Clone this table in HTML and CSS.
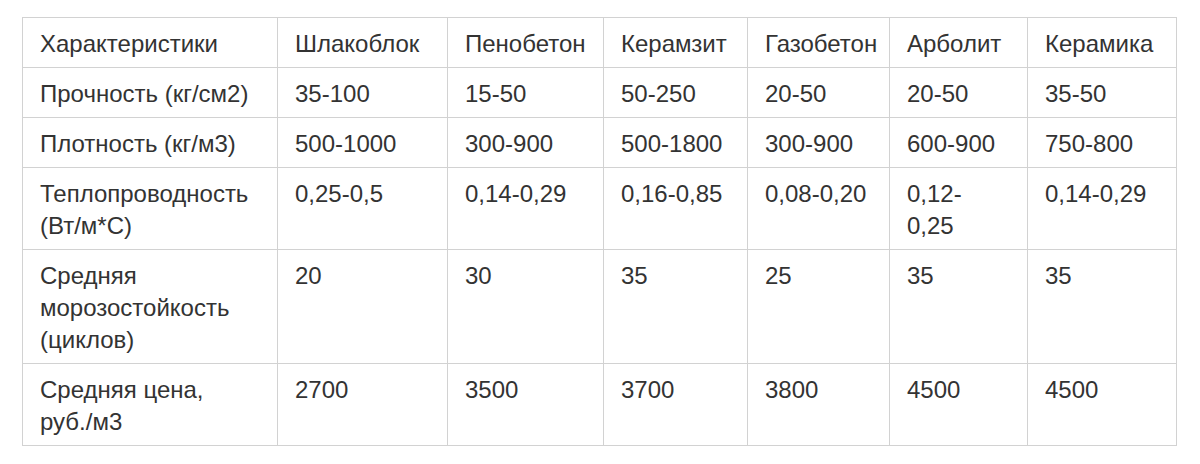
FILE: index.html
```html
<!DOCTYPE html>
<html lang="ru">
<head>
<meta charset="utf-8">
<title>Характеристики блоков</title>
<link rel="stylesheet" href="styles.css">
</head>
<body>
<div class="page">
  <table class="spec">
    <colgroup>
      <col class="c1"><col class="c2"><col class="c3"><col class="c4"><col class="c5"><col class="c6"><col class="c7">
    </colgroup>
    <thead>
      <tr>
        <th>Характеристики</th>
        <th>Шлакоблок</th>
        <th>Пенобетон</th>
        <th>Керамзит</th>
        <th>Газобетон</th>
        <th>Арболит</th>
        <th>Керамика</th>
      </tr>
    </thead>
    <tbody>
      <tr>
        <td>Прочность (кг/см2)</td>
        <td>35-100</td>
        <td>15-50</td>
        <td>50-250</td>
        <td>20-50</td>
        <td>20-50</td>
        <td>35-50</td>
      </tr>
      <tr>
        <td>Плотность (кг/м3)</td>
        <td>500-1000</td>
        <td>300-900</td>
        <td>500-1800</td>
        <td>300-900</td>
        <td>600-900</td>
        <td>750-800</td>
      </tr>
      <tr>
        <td>Теплопроводность (Вт/м*С)</td>
        <td>0,25-0,5</td>
        <td>0,14-0,29</td>
        <td>0,16-0,85</td>
        <td>0,08-0,20</td>
        <td>0,12-<br>0,25</td>
        <td>0,14-0,29</td>
      </tr>
      <tr>
        <td>Средняя морозостойкость (циклов)</td>
        <td>20</td>
        <td>30</td>
        <td>35</td>
        <td>25</td>
        <td>35</td>
        <td>35</td>
      </tr>
      <tr>
        <td>Средняя цена, <span class="nowrap">руб./м3</span></td>
        <td>2700</td>
        <td>3500</td>
        <td>3700</td>
        <td>3800</td>
        <td>4500</td>
        <td>4500</td>
      </tr>
    </tbody>
  </table>
</div>
</body>
</html>
```

FILE: styles.css
```css
html, body {
  margin: 0;
  padding: 0;
  background: #ffffff;
}

.page {
  padding: 17px 0 0 22px;
}

.spec {
  border-collapse: collapse;
  table-layout: fixed;
  width: 1155px;
  font-family: "Liberation Sans", Arial, sans-serif;
  font-size: 24px;
  line-height: 32px;
  color: #333333;
  border: 1px solid #d2d2d2;
}

.c1 { width: 255px; }
.c2 { width: 170px; }
.c3 { width: 156px; }
.c4 { width: 144px; }
.c5 { width: 142px; }
.c6 { width: 138px; }
.c7 { width: 149px; }

.spec th,
.spec td {
  border: 1px solid #d2d2d2;
  padding: 10px 10px 7px 17px;
  text-align: left;
  vertical-align: top;
  font-weight: normal;
}

.nowrap {
  white-space: nowrap;
}
```
